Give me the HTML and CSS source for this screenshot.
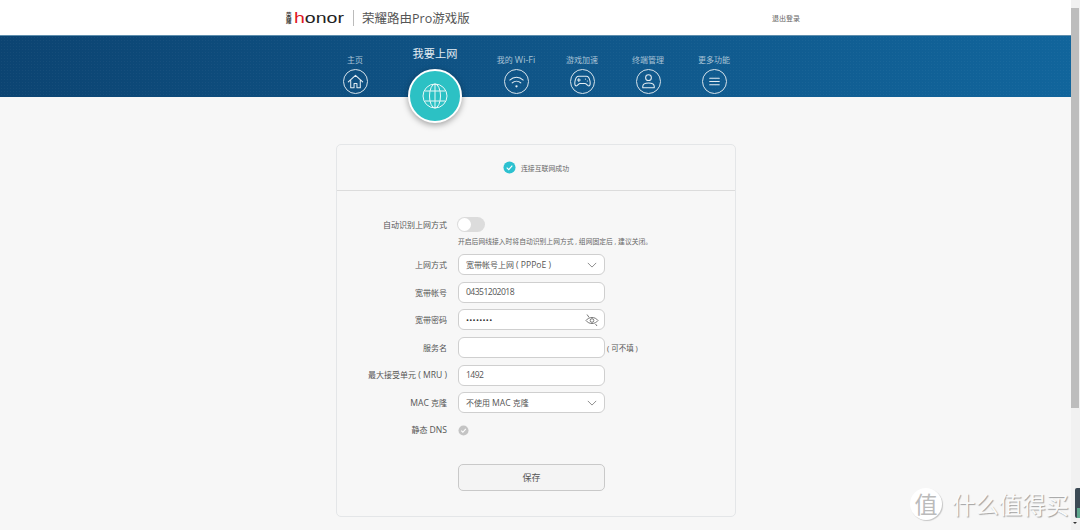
FILE: index.html
```html
<!DOCTYPE html>
<html lang="zh">
<head>
<meta charset="utf-8">
<title>荣耀路由Pro游戏版</title>
<link rel="stylesheet" href="styles.css">
</head>
<body>
<div class="page">
  <div class="main">
    <header class="top">
      <div class="brand">
        <span class="logo-cn">荣耀</span>
        <span class="logo"><span class="logo-h">h</span>onor</span>
        <span class="divider"></span>
        <span class="product">荣耀路由Pro游戏版</span>
      </div>
      <a class="logout">退出登录</a>
    </header>
    <nav class="banner">
      <div class="nav-item home">
        <span class="nav-label">主页</span>
        <span class="nav-icon">
          <svg viewBox="0 0 24 24"><path d="M4.500 12.500 12 5.500l7.500 7M7 11v7.500h3.500v-4.500h3v4.500H17V11"/></svg>
        </span>
      </div>
      <div class="nav-item active">
        <span class="active-label">我要上网</span>
        <span class="globe">
          <svg viewBox="0 0 26 26"><circle cx="13" cy="13" r="12"/><ellipse cx="13" cy="13" rx="5.500" ry="12"/><path d="M13 1v24M2.500 8h21M2.500 18h21"/></svg>
        </span>
      </div>
      <div class="nav-item wifi">
        <span class="nav-label">我的 <span class="lat-nav">Wi-Fi</span></span>
        <span class="nav-icon">
          <svg viewBox="0 0 24 24"><path d="M5 10.500c4-3.800 10-3.800 14 0M7.500 13.500c2.600-2.400 6.400-2.400 9 0"/><circle class="dot" cx="12" cy="17" r="1.200"/></svg>
        </span>
      </div>
      <div class="nav-item game">
        <span class="nav-label">游戏加速</span>
        <span class="nav-icon">
          <svg viewBox="0 0 24 24"><path d="M8 6.500h8c2.500 0 3.300 2.500 3.800 5 .5 2.800.3 5-1.200 5.200-1.500.2-2.500-2.700-4-2.700H9.400c-1.500 0-2.500 2.900-4 2.700C3.900 16.500 3.700 14.300 4.200 11.500c.5-2.500 1.300-5 3.800-5ZM6.700 10.500h3M8.200 9v3M15 9.500h.1M17 11.500h.1"/></svg>
        </span>
      </div>
      <div class="nav-item user">
        <span class="nav-label">终端管理</span>
        <span class="nav-icon">
          <svg viewBox="0 0 24 24"><circle cx="12" cy="8" r="3"/><path d="M6 18.500v-1.300c0-2.300 2-3.700 6-3.700s6 1.400 6 3.700v1.300Z"/></svg>
        </span>
      </div>
      <div class="nav-item more">
        <span class="nav-label">更多功能</span>
        <span class="nav-icon">
          <svg viewBox="0 0 24 24"><path d="M7 8.700h10M7 12h10M7 15.300h10"/></svg>
        </span>
      </div>
    </nav>
    <section class="content">
      <div class="card">
        <div class="status">
          <svg class="status-icon" viewBox="0 0 14 14"><circle cx="7" cy="7" r="6.500"/><path d="M4 7.200 6.200 9.300 10 5"/></svg>
          <span>连接互联网成功</span>
        </div>
        <div class="form">
          <div class="row toggle-row">
            <span class="label">自动识别上网方式</span>
            <span class="toggle"><span class="knob"></span></span>
          </div>
          <div class="hint">开启后网线接入时将自动识别上网方式 , 组网固定后 , 建议关闭。</div>
          <div class="row">
            <span class="label">上网方式</span>
            <span class="field"><span class="value">宽带帐号上网 <span class="lat">( PPPoE )</span></span>
              <svg class="chev" viewBox="0 0 12 7"><path d="M1 1 6 6 11 1"/></svg>
            </span>
          </div>
          <div class="row">
            <span class="label">宽带帐号</span>
            <span class="field"><span class="value digits">04351202018</span></span>
          </div>
          <div class="row">
            <span class="label">宽带密码</span>
            <span class="field"><span class="dots">••••••••</span>
              <svg class="eye" viewBox="0 0 14 14"><path d="M1 7.500c3-4 9-4 12 0-3 4-9 4-12 0Z"/><circle cx="7" cy="7.500" r="1.800"/><path d="M2 1.500 4 4.300M10.500 11l1.500 2"/></svg>
            </span>
          </div>
          <div class="row">
            <span class="label">服务名</span>
            <span class="field"></span>
            <span class="note">( 可不填 )</span>
          </div>
          <div class="row">
            <span class="label">最大接受单元 <span class="lat">( MRU )</span></span>
            <span class="field"><span class="value digits">1492</span></span>
          </div>
          <div class="row">
            <span class="label"><span class="lat">MAC</span> 克隆</span>
            <span class="field"><span class="value">不使用 <span class="lat">MAC</span> 克隆</span>
              <svg class="chev" viewBox="0 0 12 7"><path d="M1 1 6 6 11 1"/></svg>
            </span>
          </div>
          <div class="row">
            <span class="label">静态 <span class="lat">DNS</span></span>
            <svg class="check" viewBox="0 0 12 12"><circle cx="6" cy="6" r="5.500"/><path d="M3.500 6.200 5.300 7.900 8.500 4.300"/></svg>
          </div>
          <div class="actions"><button class="save" type="button">保存</button></div>
        </div>
      </div>
    </section>
  </div>
  <aside class="scrollbar">
    <span class="scroll-up"></span>
    <span class="scroll-thumb"></span>
  </aside>
</div>
<div class="watermark">
  <span class="wm-badge">值</span>
  <span class="wm-text">什么值得买</span>
</div>
<div class="widget"><span class="widget-bar"></span></div>
<span class="scroll-down"></span>
</body>
</html>
```
FILE: styles.css
```css
* { box-sizing: border-box; }
html, body { margin: 0; height: 530px; overflow: hidden; }
body {
  position: relative;
  font-family: "Open Sans", "Noto Sans CJK SC", sans-serif;
  color: #555;
  background: #f7f7f7;
}
.page { display: flex; height: 530px; }
.main { flex: 1; min-width: 0; }

.top {
  height: 35px;
  background: #fff;
  display: flex;
  align-items: center;
  padding-left: 286px;
}
.brand { display: flex; align-items: center; width: 486px; }
.logo-cn {
  width: 6px;
  font-size: 5.500px;
  line-height: 6px;
  font-weight: 700;
  color: #333;
  margin-right: 2px;
}
.logo {
  font-family: "Liberation Sans", sans-serif;
  font-size: 15px;
  line-height: 20px;
  color: #222;
  transform: scaleX(1.3);
  transform-origin: left center;
  width: 59px;
}
.logo-h { color: #e0161e; }
.divider { width: 1px; height: 16px; background: #bbb; margin-right: 8px; }
.product { font-size: 12.500px; color: #555; white-space: nowrap; }
.logout { font-size: 7px; color: #666; white-space: nowrap; }

.banner {
  height: 62px;
  border-top: 1px solid #5f8fae;
  background-color: #0f5b8e;
  background-image:
    radial-gradient(rgba(255, 255, 255, .035) 1px, transparent 1px),
    linear-gradient(100deg, #0c4472 0%, #10578a 55%, #11659c 100%);
  background-size: 3px 3px, 100% 100%;
  display: flex;
  align-items: flex-start;
  padding-left: 323px;
}
.nav-item {
  display: flex;
  flex-direction: column;
  align-items: center;
  width: 66px;
  padding-top: 18px;
}
.nav-item.home { width: 64px; }
.nav-item.active { width: 96px; padding-top: 10px; position: relative; z-index: 2; }
.nav-label {
  font-size: 8px;
  line-height: 12px;
  color: #a9c3d6;
  white-space: nowrap;
}
.lat-nav { font-size: 9px; }
.active-label {
  font-size: 11.200px;
  line-height: 16px;
  color: #e4edf3;
  white-space: nowrap;
}
.nav-icon {
  width: 25px;
  height: 25px;
  margin-top: 3px;
  border: 1px solid #d5e2ea;
  border-radius: 50%;
  display: block;
}
.nav-icon svg { display: block; width: 23px; height: 23px; }
.nav-icon path, .nav-icon circle {
  fill: none;
  stroke: #e4edf3;
  stroke-width: 1.100;
  stroke-linecap: round;
  stroke-linejoin: round;
}
.nav-icon circle.dot { fill: #e4edf3; stroke: none; }
.globe {
  width: 54px;
  height: 54px;
  margin-top: 7px;
  border: 2px solid #fff;
  border-radius: 50%;
  background: #2cc1c4;
  box-shadow: 0 2px 6px rgba(0, 0, 0, .35);
  display: flex;
  align-items: center;
  justify-content: center;
}
.globe svg { width: 26px; height: 26px; }
.globe circle, .globe ellipse, .globe path { fill: none; stroke: #e9f8f8; stroke-width: 1; }

.content { padding: 47px 0 0 336px; }
.card {
  width: 400px;
  height: 373px;
  border: 1px solid #e4e6e8;
  border-radius: 5px;
}
.status {
  height: 46px;
  border-bottom: 1px solid #dcdcdc;
  display: flex;
  align-items: center;
  justify-content: center;
  gap: 5px;
  font-size: 6.900px;
  color: #666;
}
.status-icon { width: 13px; height: 13px; }
.status-icon circle { fill: #2cc1d0; }
.status-icon path, .check path { fill: none; stroke: #fff; stroke-width: 1.200; }

.form { padding-top: 22px; }
.row {
  display: flex;
  align-items: center;
  height: 21px;
  margin-bottom: 6.670px;
}
.row.toggle-row { height: 22px; margin-bottom: 0; }
.label {
  width: 110px;
  margin-right: 11px;
  text-align: right;
  font-size: 8px;
  color: #555;
  white-space: nowrap;
}
.lat { font-size: 8.600px; }
.digits { font-size: 8.600px; letter-spacing: -.55px; }
.toggle {
  width: 28px;
  height: 15px;
  border-radius: 8px;
  background: #dcdcdc;
  padding: 1px;
  margin-left: -1px;
}
.knob {
  display: block;
  width: 13px;
  height: 13px;
  border-radius: 50%;
  background: #fff;
}
.hint {
  margin-left: 121px;
  height: 19px;
  padding-top: 1px;
  font-size: 6.800px;
  line-height: 12px;
  color: #666;
  white-space: nowrap;
}
.field {
  position: relative;
  width: 147px;
  height: 21px;
  border: 1px solid #cfcfcf;
  border-radius: 6px;
  background: #fff;
  padding: 0 7px;
  display: flex;
  align-items: center;
  font-size: 8px;
  color: #555;
  white-space: nowrap;
}
.dots { font-size: 8px; letter-spacing: .3px; color: #333; }
.chev {
  position: absolute;
  right: 7px;
  top: 7px;
  width: 10px;
  height: 6px;
}
.chev path { fill: none; stroke: #777; stroke-width: 1; }
.eye { position: absolute; right: 5px; top: 3px; width: 14px; height: 14px; }
.eye path, .eye circle { fill: none; stroke: #777; stroke-width: 1; }
.note { font-size: 7.500px; color: #555; white-space: nowrap; margin-left: 2px; }
.check { width: 11px; height: 11px; }
.check circle { fill: #c4c4c4; }
.actions { padding: 16px 0 0 121px; }
.save {
  display: block;
  width: 147px;
  height: 27px;
  border: 1px solid #c9c9c9;
  border-radius: 5px;
  background: #f4f4f4;
  font: 9px "Noto Sans CJK SC", sans-serif;
  color: #555;
}

.scrollbar {
  width: 9px;
  background: #f1f1f1;
  display: flex;
  flex-direction: column;
}
.scroll-up { height: 8px; }
.scroll-thumb { width: 8px; height: 400px; background: #bdbdbd; }

.watermark {
  position: absolute;
  left: 910px;
  top: 488px;
  display: flex;
  align-items: center;
  gap: 10px;
}
.wm-badge {
  width: 32px;
  height: 32px;
  border-radius: 50%;
  background: #fff;
  font: 23px/30px "Noto Sans CJK SC", sans-serif;
  text-align: center;
  color: #bbb;
  box-shadow: 1px 1px 1px rgba(0, 0, 0, .2);
}
.wm-text {
  font: 23.400px/30px "Noto Sans CJK SC", sans-serif;
  color: #fafafa;
  text-shadow: 1px 1px 1px rgba(0, 0, 0, .35);
  white-space: nowrap;
}
.widget {
  position: absolute;
  left: 1075px;
  top: 488px;
  width: 5px;
  height: 30px;
  background: #3c4a55;
  border-radius: 2px 0 0 2px;
  display: flex;
  align-items: flex-end;
  padding-left: 2px;
}
.widget-bar { width: 3px; height: 10px; background: #5fa88e; }
.scroll-down {
  position: absolute;
  left: 1073px;
  top: 522px;
  border-left: 2px solid transparent;
  border-right: 2px solid transparent;
  border-top: 2px solid #333;
}
```
